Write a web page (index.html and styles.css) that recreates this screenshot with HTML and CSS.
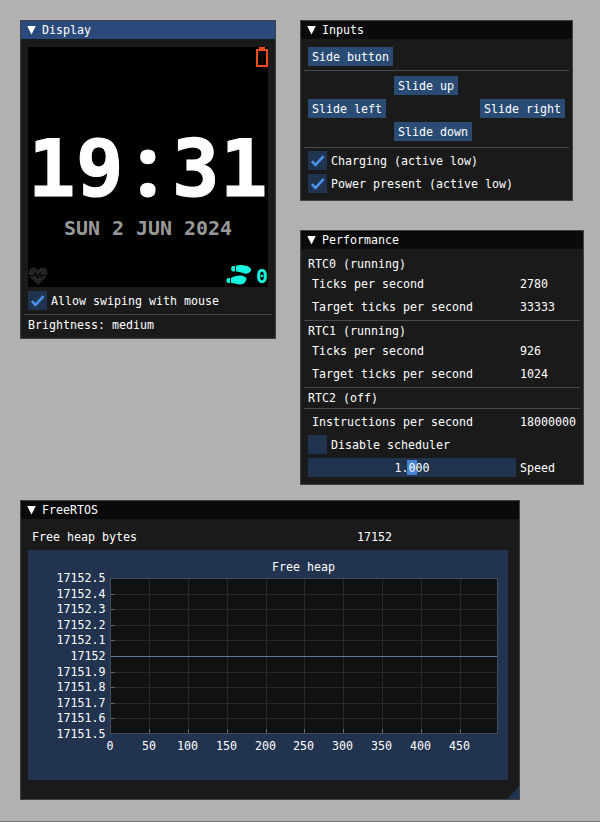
FILE: index.html
```html
<!DOCTYPE html>
<html lang="en">
<head>
<meta charset="utf-8">
<title>Simulator</title>
<link rel="stylesheet" href="styles.css">
</head>
<body>
<main class="desktop">
  <section class="window display">
    <header class="title active"><i class="arrow"></i>Display</header>
    <div class="content">
      <div class="screen">
        <div class="screen-top">
          <svg width="12" height="20" viewBox="0 0 12 20"><path d="M3 0h6v2h3v18H0V2h3zM2 4v14h8V4z" fill="#ea4f1b" fill-rule="evenodd"/></svg>
        </div>
        <div class="clock">19<span class="colon">:</span>31</div>
        <div class="date">SUN 2 JUN 2024</div>
        <div class="screen-bottom">
          <svg width="20" height="18" viewBox="0 0 20 18"><path d="M10 3C8-.5 2-.5 .8 4 0 7 1.500 9.500 3 11l7 7 7-7c1.500-1.500 3-4 2.200-7C18-.5 12-.5 10 3z" fill="#242424"/><path d="M1 8.500h5l1.500-2.500 2 5 2.500-5 1.500 4 1-1.500h5" fill="none" stroke="#000" stroke-width="1.100"/></svg>
          <div class="steps">
            <svg width="26" height="20" viewBox="0 0 26 20" fill="#16f5de"><path d="M10 1C12-.2 17-.3 21 1c3 1 4.500 3 4 4.500C24 8 21 9.200 18.500 8.500 15 7.300 13 7 10 6.500zM9 1v5.500H7C4.500 6 4.500 1.500 7 1zM5 13c3-2 8-3 12-2 3 .8 4.200 2.500 3 4.500-1 3-4 4.500-7 4-3-.5-5-1.500-8-1.500zM4 13v5H2.500C-.5 17.500-.5 13.500 2.500 13z"/></svg>
            <span>0</span>
          </div>
        </div>
      </div>
      <div class="check"><span class="box"><svg viewBox="0 0 19 19"><path d="M3.800 10.200 7.500 13.900 15.600 5.200"/></svg></span>Allow swiping with mouse</div>
      <hr>
      <div class="line">Brightness: medium</div>
    </div>
  </section>

  <section class="window inputs">
    <header class="title"><i class="arrow"></i>Inputs</header>
    <div class="content">
      <button>Side button</button>
      <hr>
      <div class="pad">
        <button class="up">Slide up</button>
        <button class="left">Slide left</button>
        <button class="right">Slide right</button>
        <button class="down">Slide down</button>
      </div>
      <hr>
      <div class="check"><span class="box"><svg viewBox="0 0 19 19"><path d="M3.800 10.200 7.500 13.900 15.600 5.200"/></svg></span>Charging (active low)</div>
      <div class="check"><span class="box"><svg viewBox="0 0 19 19"><path d="M3.800 10.200 7.500 13.900 15.600 5.200"/></svg></span>Power present (active low)</div>
    </div>
  </section>

  <section class="window performance">
    <header class="title"><i class="arrow"></i>Performance</header>
    <div class="content">
      <div class="line">RTC0 (running)</div>
      <div class="row"><span>Ticks per second</span><span>2780</span></div>
      <div class="row"><span>Target ticks per second</span><span>33333</span></div>
      <hr>
      <div class="line">RTC1 (running)</div>
      <div class="row"><span>Ticks per second</span><span>926</span></div>
      <div class="row"><span>Target ticks per second</span><span>1024</span></div>
      <hr>
      <div class="line">RTC2 (off)</div>
      <hr>
      <div class="row"><span>Instructions per second</span><span>18000000</span></div>
      <div class="check"><span class="box"></span>Disable scheduler</div>
      <div class="speed"><div class="slider"><i class="grab"></i><span>1.000</span></div>Speed</div>
    </div>
  </section>

  <section class="window freertos">
    <header class="title"><i class="arrow"></i>FreeRTOS</header>
    <div class="content">
      <div class="row"><span>Free heap bytes</span><span>17152</span></div>
      <svg class="plot" width="480" height="230" viewBox="0 0 480 230">
        <rect x="82" y="28" width="388" height="156" fill="#101113"/>
        <path class="grid" d="M121.500 28v156M160.500 28v156M199.500 28v156M238.500 28v156M276.500 28v156M315.500 28v156M354.500 28v156M393.500 28v156M432.500 28v156M82 44.500h388M82 59.500h388M82 75.500h388M82 90.500h388M82 122.500h388M82 137.500h388M82 153.500h388M82 168.500h388"/>
        <path class="tick" d="M121.500 179v5M160.500 179v5M199.500 179v5M238.500 179v5M276.500 179v5M315.500 179v5M354.500 179v5M393.500 179v5M432.500 179v5M82 44.500h5M82 59.500h5M82 75.500h5M82 90.500h5M82 106.500h10M82 122.500h5M82 137.500h5M82 153.500h5M82 168.500h5"/>
        <path class="series" d="M83 106.500h387"/>
        <rect class="frame" x="82.500" y="28.500" width="387" height="155"/>
        <g class="middle">
          <text x="275.500" y="21">Free heap</text>
          <text x="82" y="200">0</text><text x="121" y="200">50</text><text x="159.500" y="200">100</text><text x="198.500" y="200">150</text><text x="237.500" y="200">200</text><text x="275.500" y="200">250</text><text x="314.500" y="200">300</text><text x="353.500" y="200">350</text><text x="392.500" y="200">400</text><text x="431.500" y="200">450</text>
        </g>
        <g class="end">
          <text x="77.500" y="32">17152.5</text><text x="77.500" y="48">17152.4</text><text x="77.500" y="63">17152.3</text><text x="77.500" y="79">17152.2</text><text x="77.500" y="94">17152.1</text><text x="77.500" y="110">17152</text><text x="77.500" y="126">17151.9</text><text x="77.500" y="141">17151.8</text><text x="77.500" y="157">17151.7</text><text x="77.500" y="172">17151.6</text><text x="77.500" y="188">17151.5</text>
        </g>
      </svg>
    </div>
    <i class="grip"></i>
  </section>
</main>
</body>
</html>
```
FILE: styles.css
```css
* { box-sizing: border-box; }
body { margin: 0; }
.desktop {
  position: relative;
  width: 600px;
  height: 822px;
  background: #b1b1b1;
  border-bottom: 1px solid #77777a;
  overflow: hidden;
  color: #fff;
  font: 11.63px/13px "DejaVu Sans Mono", monospace;
}
.window {
  position: absolute;
  background: #1a1a1a;
  border: 1px solid #3f3f45;
}
.display { left: 20px; top: 20px; width: 256px; height: 319px; }
.inputs { left: 300px; top: 20px; width: 273px; height: 181px; }
.performance { left: 300px; top: 230px; width: 284px; height: 255px; }
.freertos { left: 20px; top: 500px; width: 500px; height: 300px; }

.title {
  display: flex;
  align-items: center;
  height: 18px;
  padding: 0 0 0 6px;
  gap: 6px;
  background: #0a0a0a;
}
.title.active { background: #294a7a; }
.arrow {
  width: 9px;
  height: 9px;
  background: #fff;
  clip-path: polygon(0 0, 100% 0, 50% 100%);
}
.content {
  display: flex;
  flex-direction: column;
  align-items: flex-start;
  gap: 4px;
  padding: 8px 7px 7px;
}
hr {
  align-self: stretch;
  height: 1px;
  margin: 0 -4px -1px;
  border: 0;
  background: #48484d;
}
.line { height: 13px; padding-top: 1px; white-space: nowrap; }
button {
  height: 19px;
  padding: 1px 4px 0;
  border: 0;
  background: #294b74;
  color: inherit;
  font: inherit;
  line-height: 18px;
  white-space: nowrap;
}
.check { display: flex; align-items: flex-start; gap: 4px; height: 19px; line-height: 21px; white-space: nowrap; }
.box { width: 19px; height: 19px; background: #20334f; }
.box svg { display: block; }
.box path { fill: none; stroke: #4a92ec; stroke-width: 2.600; }

.screen {
  display: flex;
  flex-direction: column;
  width: 240px;
  height: 240px;
  background: #000;
}
.screen-top { display: flex; justify-content: flex-end; height: 82px; }
.clock {
  height: 80px;
  line-height: 81px;
  font-size: 79px;
  font-weight: bold;
  letter-spacing: .44px;
  white-space: nowrap;
  -webkit-text-stroke: 1.2px #fff;
}
.colon {
  display: inline-block;
  width: 48px;
  line-height: 0;
  text-align: center;
  font-family: "Open Sans", sans-serif;
  font-size: 83px;
}
.date {
  height: 40px;
  line-height: 40px;
  padding-left: 36px;
  color: #999;
  font-size: 19.930px;
  font-weight: bold;
  white-space: nowrap;
}
.screen-bottom {
  display: flex;
  justify-content: space-between;
  align-items: flex-end;
  height: 38px;
  padding-bottom: 2px;
}
.steps { display: flex; align-items: center; gap: 4px; height: 20px; color: #16f5de; font-size: 20px; font-weight: bold; }
.steps span { padding-top: 2px; }

.pad {
  display: grid;
  grid-template-columns: 78px 78px 85px;
  gap: 4px 8px;
  padding: 2px 0;
  justify-items: start;
}
.up { grid-area: 1 / 2; }
.left { grid-area: 2 / 1; }
.right { grid-area: 2 / 3; }
.down { grid-area: 3 / 2; }

.row { display: grid; grid-template-columns: 208px 1fr; height: 19px; padding: 4px 0 2px 4px; white-space: nowrap; }
.freertos .row { grid-template-columns: 325px 1fr; }
.speed { display: flex; align-items: flex-start; gap: 4px; height: 19px; line-height: 21px; }
.slider {
  display: flex;
  align-items: flex-start;
  justify-content: center;
  position: relative;
  width: 208px;
  height: 19px;
  background: #20334f;
}
.slider span { position: relative; }
.grab { position: absolute; left: 99px; top: 2px; width: 10px; height: 15px; background: #4484d2; }

.plot { display: block; background: #21334e; }
.plot text { fill: #fff; }
.middle { text-anchor: middle; }
.end { text-anchor: end; }
.grid { stroke: #27282a; fill: none; }
.tick { stroke: #65676b; fill: none; }
.series { stroke: #5c7ba0; }
.frame { fill: none; stroke: #454d5b; }
.grip {
  position: absolute;
  right: 0;
  bottom: 0;
  width: 12px;
  height: 13px;
  background: #20334f;
  clip-path: polygon(100% 0, 100% 100%, 0 100%);
}
```
